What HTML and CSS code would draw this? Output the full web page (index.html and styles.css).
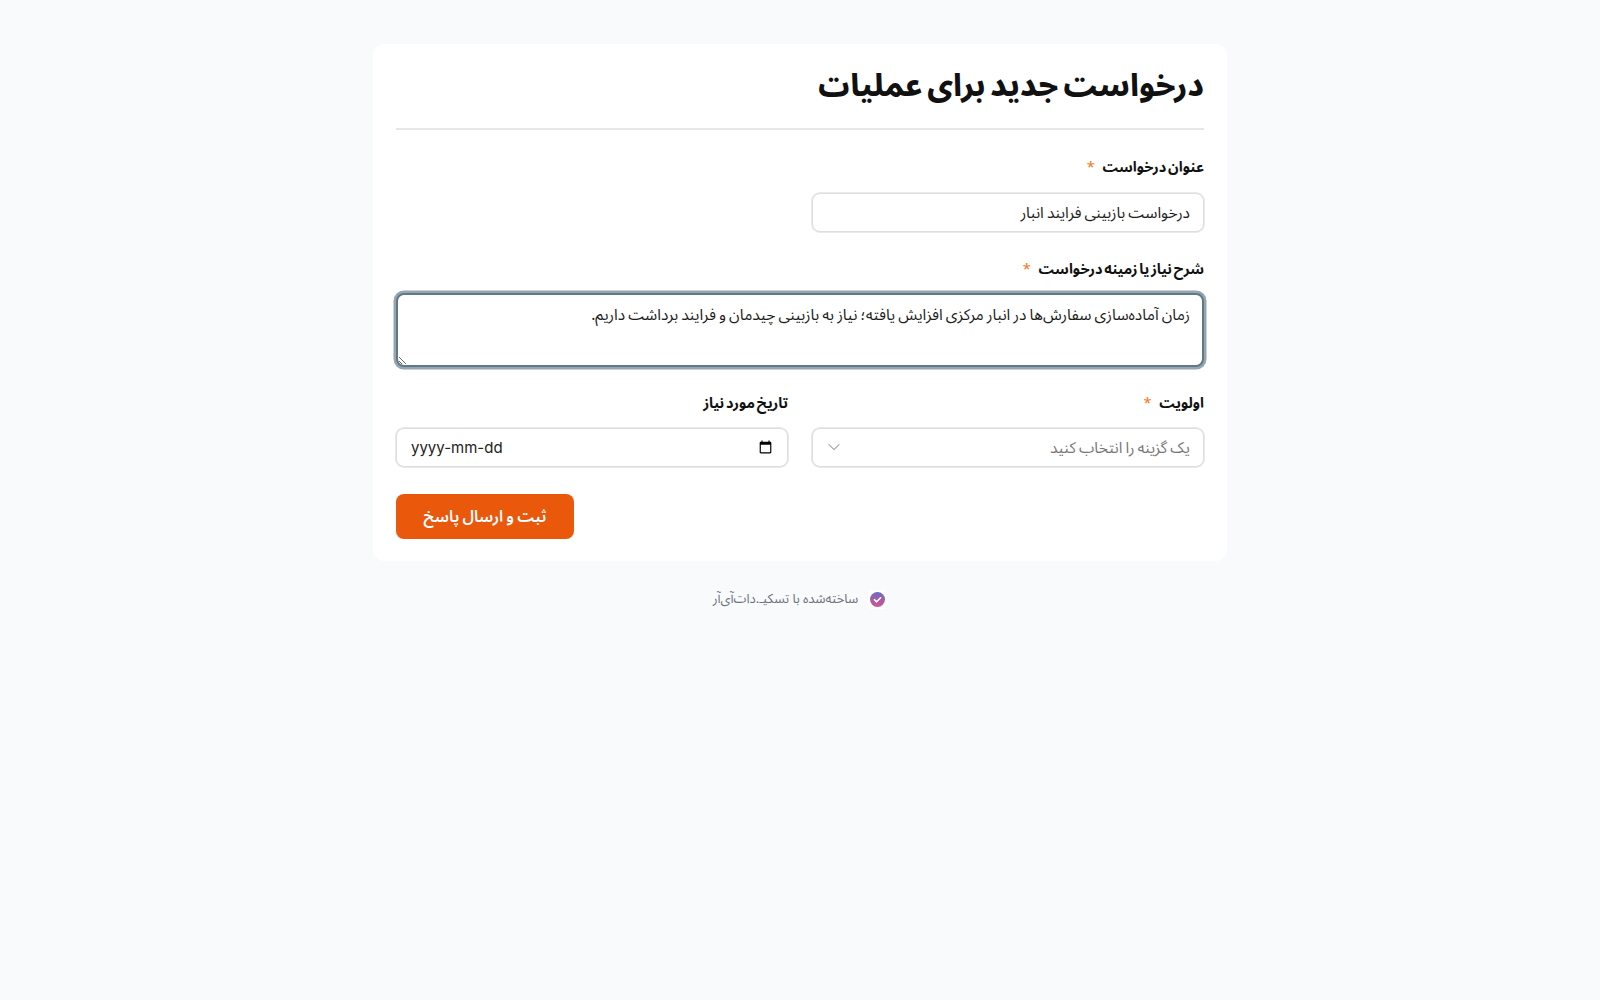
FILE: index.html
```html
<!DOCTYPE html>
<html lang="fa" dir="rtl">
<head>
<meta charset="utf-8">
<title>درخواست جدید برای عملیات</title>
<link rel="stylesheet" href="styles.css">
</head>
<body>
<main class="page">
  <form class="card">
    <h1 class="title">درخواست جدید برای عملیات</h1>
    <div class="field field-first">
      <label class="label">عنوان درخواست <span class="req">*</span></label>
      <div class="grid">
        <input class="control" type="text" value="درخواست بازبینی فرایند انبار">
      </div>
    </div>
    <div class="field field-area">
      <label class="label">شرح نیاز یا زمینه درخواست <span class="req">*</span></label>
      <textarea class="control area" rows="3">زمان آماده‌سازی سفارش‌ها در انبار مرکزی افزایش یافته؛ نیاز به بازبینی چیدمان و فرایند برداشت داریم.</textarea>
    </div>
    <div class="grid field-row">
      <div class="field">
        <label class="label">اولویت <span class="req">*</span></label>
        <div class="control-wrap">
          <select class="control select"><option>یک گزینه را انتخاب کنید</option></select>
          <svg class="chevron" width="16" height="16" viewBox="0 0 16 16" fill="none" stroke="#a3a9b3" stroke-width="1.2" stroke-linecap="round" stroke-linejoin="round"><path d="M3 5.7l5 5 5-5"/></svg>
        </div>
      </div>
      <div class="field">
        <label class="label">تاریخ مورد نیاز</label>
        <div class="control-wrap">
          <input class="control date" type="date" dir="ltr">
          <span class="date-mask" dir="ltr">yyyy-mm-dd</span>
        </div>
      </div>
    </div>
    <div class="actions"><button class="submit" type="button">ثبت و ارسال پاسخ</button></div>
  </form>
  <footer class="foot">
    <span class="badge">
      <svg width="15" height="15" viewBox="0 0 15 15"><defs><linearGradient id="g" x1="0" y1="0" x2="0" y2="1"><stop offset="0" stop-color="#6b6cc4"/><stop offset="1" stop-color="#d2548f"/></linearGradient></defs><circle cx="7.5" cy="7.5" r="7.5" fill="url(#g)"/><path d="M4.4 7.7l2.2 2.1 4-4" fill="none" stroke="#fff" stroke-width="1.6" stroke-linecap="round" stroke-linejoin="round"/></svg>
    </span>
    <span class="foot-text">ساخته‌شده با تسکیـ.دات‌آی‌آر</span>
  </footer>
</main>
</body>
</html>
```
FILE: styles.css
```css
* { box-sizing: border-box; }
html, body { margin: 0; height: 100%; }
body {
  background: #f9fafb;
  color: #111;
  font-family: "Noto Sans Arabic", "Vazirmatn", "Noto Sans", "DejaVu Sans", sans-serif;
}
.page { display: flex; flex-direction: column; align-items: center; padding-top: 44px; }
.card {
  width: 854px;
  background: #fff;
  border-radius: 12px;
  padding: 18px 23px 22px;
}
.title {
  margin: 0 0 26px;
  padding-bottom: 18px;
  border-bottom: 2px solid #e5e7eb;
  font-size: 31px;
  line-height: 48px;
  font-weight: 800;
  font-stretch: 95%;
  word-spacing: -3.5px;
}
.field { display: flex; flex-direction: column; gap: 12px; }
.field-first { gap: 13px; margin-bottom: 26px; }
.field-row { margin-bottom: 27px; }
.field-area { gap: 11px; margin-bottom: 25px; }
.label { font-size: 14.5px; line-height: 24px; font-weight: 700; word-spacing: -2px; }
.req { color: #f97316; font-weight: 400; margin-right: 6px; }
.grid { display: grid; grid-template-columns: 1fr 1fr; gap: 24px; }
.control {
  display: block;
  width: 100%;
  height: 39px;
  padding: 0 13px;
  background: #fff;
  border: 1px solid #dedede;
  box-shadow: 0 0 0 1px #e9e9e9;
  border-radius: 8px;
  font: inherit;
  font-size: 15.5px;
  word-spacing: -0.9px;
  color: #1c1c1c;
}
.area {
  height: 74px;
  padding: 8px 12px 0;
  line-height: 24px;
  border: 2px solid #5f7a87;
  box-shadow: 0 0 0 2.5px #96a6b0;
  outline: 0;
}
.control-wrap { position: relative; }
.select { appearance: none; color: #777; }
.chevron { position: absolute; left: 14px; top: 11px; }
.date { padding-right: 12px; font-family: "Inter", sans-serif; }
.date::-webkit-datetime-edit { opacity: 0; }
.date-mask {
  position: absolute;
  left: 15px;
  top: 0;
  line-height: 39px;
  font-family: "Inter", sans-serif;
  font-size: 15px;
  color: #222;
  pointer-events: none;
}
.actions { display: flex; justify-content: flex-end; }
.submit {
  width: 178px;
  height: 45px;
  border: 0;
  border-radius: 8px;
  background: #ea580c;
  color: #fff;
  font: inherit;
  font-size: 16px;
  font-weight: 600;
  word-spacing: -1px;
}
.foot { display: flex; align-items: center; gap: 10px; margin-top: 29px; color: #6b7280; font-size: 13px; line-height: 19px; }
.badge { display: flex; width: 19px; height: 19px; background: #fff; border-radius: 4px; align-items: center; justify-content: center; }
```
